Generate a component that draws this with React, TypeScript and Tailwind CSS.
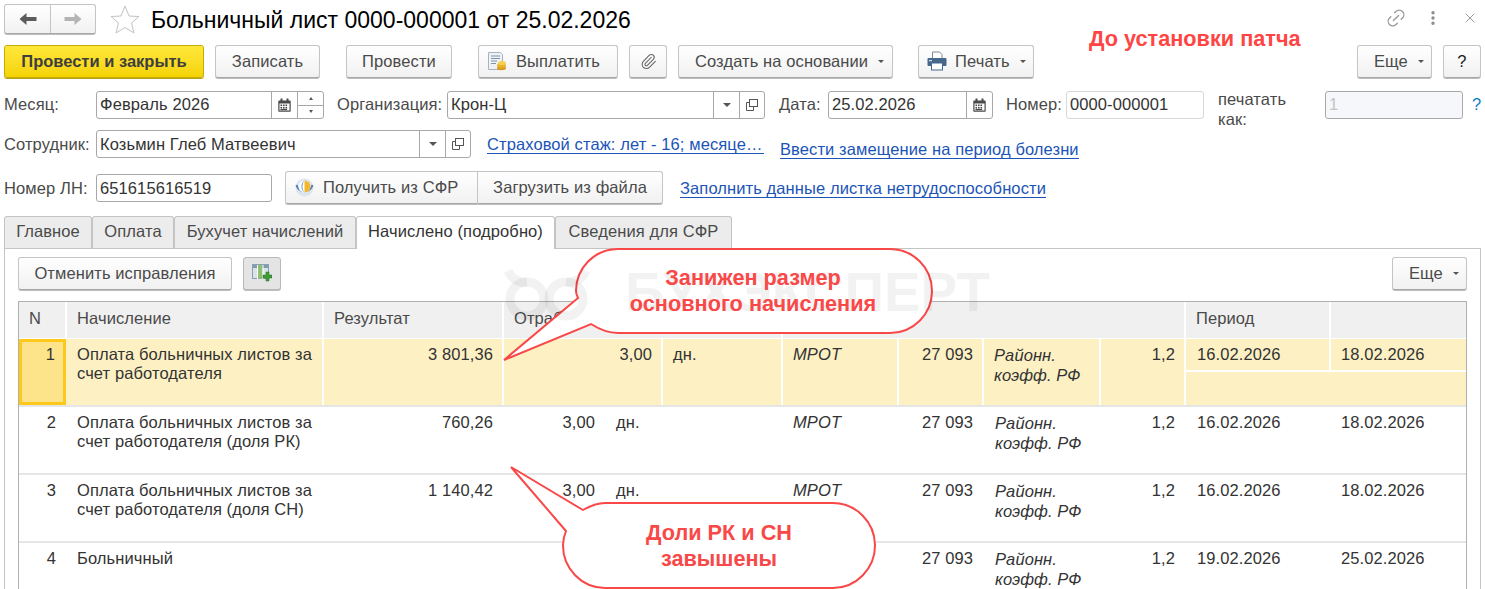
import { Link2, MoreVertical, Paperclip, X } from "lucide-react";
import type { ReactNode } from "react";

function Caret() {
  return <span className="ml-[10px] mt-[1px] h-0 w-0 border-x-[3px] border-t-[3px] border-x-transparent border-t-[#555]" />;
}

const tones = {
  plain: "border-[#c4c4c4] border-b-[#a8a8a8] bg-gradient-to-b from-white to-[#f1f1f1] text-[#4a4a4a] shadow-[0_1px_0_#bdbdbd]",
  yellow: "border-[#c9aa00] bg-gradient-to-b from-[#ffe838] to-[#f5d300] font-bold tracking-normal text-[#3e3e3e] shadow-[0_1px_0_#b9a21a]",
  pressed: "border-[#b8b8b8] bg-[#e4e4e4] shadow-[0_1px_0_#bdbdbd]",
};

function Btn({
  className = "",
  tone = "plain",
  children,
}: {
  className?: string;
  tone?: keyof typeof tones;
  children: ReactNode;
}) {
  return (
    <div className={`flex h-[33px] shrink-0 items-center rounded-[3px] border pb-[1px] ${tones[tone]} ${className}`}>
      {children}
    </div>
  );
}

function NavArrow({ color, flip }: { color: string; flip?: boolean }) {
  return (
    <svg width="18" height="14" viewBox="0 0 18 14" className={flip ? "-scale-x-100" : ""}>
      <path d="M0.500 7 L7.500 1 V5 H17.500 V9 H7.500 V13 Z" fill={color} />
    </svg>
  );
}

function CalendarIcon() {
  return (
    <svg width="13" height="14" viewBox="0 0 13 14">
      <path d="M1 2.5h11a.7.7 0 0 1 .7.7V13a.7.7 0 0 1-.7.7H1a.7.7 0 0 1-.7-.7V3.200a.7.7 0 0 1 .7-.7z" fill="#4a4a4a" />
      <rect x="2.500" y="0.500" width="2" height="3" fill="#4a4a4a" />
      <rect x="8.500" y="0.500" width="2" height="3" fill="#4a4a4a" />
      <rect x="1.500" y="5.500" width="10" height="7" fill="#fff" />
      {[2.5, 5, 7.5].map((x) =>
        [6.500, 9].map((y) => <rect key={`${x}-${y}`} x={x} y={y} width="1.600" height="1.600" fill="#4a4a4a" />),
      )}
      <rect x="2.500" y="11" width="6.600" height="1.200" fill="#4a4a4a" />
    </svg>
  );
}

function OpenIcon() {
  return (
    <svg width="12" height="12" viewBox="0 0 12 12" fill="none" stroke="#555" strokeWidth="1">
      <rect x="3.500" y="0.500" width="8" height="7" fill="#fff" />
      <path d="M3.500 3.500h-3v8h7v-4" />
    </svg>
  );
}

function BillIcon() {
  return (
    <svg width="20" height="20" viewBox="0 0 20 20">
      <path d="M1.500 1.500h12l2 2v15h-14z" fill="#eef1f5" stroke="#a9b2bd" />
      <path d="M4 5h9M4 7.500h9M4 10h6M4 12.500h5" stroke="#7f93ab" strokeWidth="1" />
      <ellipse cx="14.500" cy="17" rx="4.500" ry="2.200" fill="#d99c1f" />
      <ellipse cx="14.500" cy="14.500" rx="4.500" ry="2.200" fill="#e7b32c" />
      <ellipse cx="15" cy="12" rx="4" ry="2" fill="#f5cf50" />
    </svg>
  );
}

function PrintIcon() {
  return (
    <svg width="20" height="20" viewBox="0 0 20 20">
      <path d="M5.500 1h7l2.500 2.500V8h-9.500z" fill="#fff" stroke="#7b8796" />
      <path d="M1.500 7h17a1 1 0 0 1 1 1v6a1 1 0 0 1-1 1H1.500a1 1 0 0 1-1-1V8a1 1 0 0 1 1-1z" fill="#45688c" />
      <rect x="4.500" y="12" width="11" height="7" fill="#fff" stroke="#45688c" />
      <rect x="2" y="9" width="3" height="1.300" fill="#c7d4e1" />
    </svg>
  );
}

function SfrIcon() {
  return (
    <svg width="19" height="19" viewBox="0 0 19 19">
      <circle cx="9.500" cy="9.500" r="9" fill="#dbe5f1" />
      <path d="M1.500 7a8.300 8.300 0 0 0 16 0" fill="none" stroke="#4f7db5" strokeWidth="2" />
      <circle cx="9.500" cy="8.500" r="6" fill="#fff" />
      <path d="M9.500 2.500a6 6 0 0 1 0 12z" fill="#f2b92f" />
      <path d="M9.500 2.500a7.500 7.500 0 0 0 0 12a9 9 0 0 1 0-12z" fill="#4f7db5" />
    </svg>
  );
}

function TableAddIcon() {
  return (
    <svg width="20" height="18" viewBox="0 0 20 18">
      <rect x="0.500" y="0.500" width="16" height="14" fill="#d7e2ea" stroke="#8ba0b0" />
      <rect x="1" y="1" width="15" height="3" fill="#7f9bb0" />
      <rect x="6" y="1" width="4.500" height="13.500" fill="#8fbf70" />
      <path d="M5.500 1v14M11 1v14" stroke="#fff" />
      <path d="M14 8h3v3h3v3h-3v3h-3v-3h-3v-3h3z" fill="#3f9b35" stroke="#26701e" strokeWidth="0.500" />
    </svg>
  );
}

type Row = {
  n: string;
  name: string[];
  result: string;
  hours: string;
  from: string;
  to: string;
};

const rows: Row[] = [
  { n: "2", name: ["Оплата больничных листов за", "счет работодателя (доля РК)"], result: "760,26", hours: "3,00", from: "16.02.2026", to: "18.02.2026" },
  { n: "3", name: ["Оплата больничных листов за", "счет работодателя (доля СН)"], result: "1 140,42", hours: "3,00", from: "16.02.2026", to: "18.02.2026" },
  { n: "4", name: ["Больничный"], result: "", hours: "", from: "19.02.2026", to: "25.02.2026" },
];

const headers = [
  { label: "N", w: "w-[48px]" },
  { label: "Начисление", w: "w-[257px]" },
  { label: "Результат", w: "w-[180px]" },
  { label: "Отработано", w: "w-[279px]" },
  { label: "", w: "w-[403px]" },
  { label: "Период", w: "w-[145px]" },
  { label: "", w: "w-[135px]" },
];

export default function App() {
  return (
    <div className="relative h-[589px] w-[1485px] overflow-hidden bg-white font-['Liberation_Sans',Arial,sans-serif] text-[16.500px] leading-[20px] tracking-[0.1px] text-[#4a4a4a]">
      {/* title row */}
      <div className="flex h-[45px] items-start pl-[4px] pt-[4px]">
        <div className="flex h-[30px] w-[92px] rounded-[3px] border border-[#c4c4c4] border-b-[#a8a8a8] bg-gradient-to-b from-white to-[#f1f1f1] shadow-[0_1px_0_#bdbdbd]">
          <div className="flex w-[46px] items-center justify-center border-r border-[#c4c4c4]">
            <NavArrow color="#5c5c5c" />
          </div>
          <div className="flex flex-1 items-center justify-center">
            <NavArrow color="#b4b4b4" flip />
          </div>
        </div>
        <svg width="30" height="29" viewBox="0 0 30 29" className="ml-[14px] mt-[1px]" fill="none" stroke="#c2c2c2">
          <path d="M15 1 L19 11 L29 11.500 L21.500 18 L24 28 L15 22.500 L6 28 L8.500 18 L1 11.500 L11 11 Z" />
        </svg>
        <div className="ml-[11px] mt-[1px] whitespace-nowrap text-[23px] leading-[30px] tracking-normal text-black">
          Больничный лист 0000-000001 от 25.02.2026
        </div>
        <div className="ml-auto flex items-center pr-[7px] pt-[3px] text-[#9a9a9a]">
          <Link2 size={22} strokeWidth={1.500} className="-rotate-45" />
          <MoreVertical size={18} strokeWidth={2.500} className="ml-[17px] text-[#8a8a8a]" />
          <X size={16} strokeWidth={1.500} className="ml-[20px]" />
        </div>
      </div>

      {/* command bar */}
      <div className="flex pl-[4px]">
        <Btn tone="yellow" className="w-[200px] justify-center">
          Провести и закрыть
        </Btn>
        <Btn className="ml-[11px] w-[105px] justify-center">Записать</Btn>
        <Btn className="ml-[26px] w-[106px] justify-center">Провести</Btn>
        <Btn className="ml-[26px] w-[140px] gap-[9px] pl-[8px]">
          <BillIcon />
          Выплатить
        </Btn>
        <Btn className="ml-[11px] w-[38px] justify-center">
          <Paperclip size={17} strokeWidth={1.500} className="text-[#666]" />
        </Btn>
        <Btn className="ml-[11px] w-[215px] pl-[16px]">
          Создать на основании
          <Caret />
        </Btn>
        <Btn className="ml-[25px] w-[116px] gap-[8px] pl-[8px]">
          <PrintIcon />
          <span className="flex items-center">
            Печать
            <Caret />
          </span>
        </Btn>
        <Btn className="ml-[323px] w-[75px] pl-[16px]">
          Еще
          <Caret />
        </Btn>
        <Btn className="ml-[11px] w-[38px] justify-center text-[#222]">?</Btn>
      </div>

      {/* first field row */}
      <div className="mt-[13px] flex h-[28px] items-center pl-[4px]">
        <span className="w-[92px] pb-[2px]">Месяц:</span>
        <div className="flex h-[28px] w-[228px] items-center rounded-[3px] border border-[#a8a8a8] bg-white pl-[3px] text-[#333]">
          <span className="flex-1 pb-[2px]">Февраль 2026</span>
          <div className="flex h-full w-[26px] items-center justify-center border-l border-[#a8a8a8]">
            <CalendarIcon />
          </div>
          <div className="flex h-full w-[26px] flex-col border-l border-[#a8a8a8]">
            <div className="flex flex-1 items-center justify-center border-b border-[#a8a8a8]">
              <span className="h-0 w-0 border-x-[2px] border-b-[3px] border-x-transparent border-b-[#555]" />
            </div>
            <div className="flex flex-1 items-center justify-center">
              <span className="h-0 w-0 border-x-[2px] border-t-[3px] border-x-transparent border-t-[#555]" />
            </div>
          </div>
        </div>
        <span className="ml-[13px] w-[110px] whitespace-nowrap pb-[2px]">Организация:</span>
        <div className="flex h-[28px] w-[318px] items-center rounded-[3px] border border-[#a8a8a8] pl-[3px] text-[#333]">
          <span className="flex-1 pb-[2px]">Крон-Ц</span>
          <div className="flex h-full w-[26px] items-center justify-center border-l border-[#a8a8a8]">
            <span className="h-0 w-0 border-x-[4px] border-t-[4px] border-x-transparent border-t-[#555]" />
          </div>
          <div className="flex h-full w-[25px] items-center justify-center border-l border-[#a8a8a8]">
            <OpenIcon />
          </div>
        </div>
        <span className="ml-[14px] w-[49px] pb-[2px]">Дата:</span>
        <div className="flex h-[28px] w-[165px] items-center rounded-[3px] border border-[#a8a8a8] pl-[3px] text-[#333]">
          <span className="flex-1 pb-[2px]">25.02.2026</span>
          <div className="flex h-full w-[26px] items-center justify-center border-l border-[#a8a8a8]">
            <CalendarIcon />
          </div>
        </div>
        <span className="ml-[13px] w-[60px] pb-[2px]">Номер:</span>
        <div className="flex h-[28px] w-[138px] items-center rounded-[3px] border border-[#d8d8d8] pb-[2px] pl-[3px] text-[#333]">
          0000-000001
        </div>
        <span className="ml-[14px] mt-[8px] w-[93px] leading-[20px]">печатать как:</span>
        <div className="ml-[14px] flex h-[28px] w-[138px] items-center rounded-[3px] border border-[#a8a8a8] bg-[#f5f7fb] pb-[2px] pl-[3px] text-[#c4c4c4]">
          1
        </div>
        <span className="ml-[9px] pb-[2px] text-[#0d7fc0]">?</span>
      </div>

      {/* employee row */}
      <div className="mt-[11px] flex h-[28px] items-center pl-[4px]">
        <span className="w-[92px]">Сотрудник:</span>
        <div className="flex h-[28px] w-[375px] items-center rounded-[3px] border border-[#a8a8a8] pl-[3px] text-[#333]">
          <span className="flex-1">Козьмин Глеб Матвеевич</span>
          <div className="flex h-full w-[26px] items-center justify-center border-l border-[#a8a8a8]">
            <span className="h-0 w-0 border-x-[4px] border-t-[4px] border-x-transparent border-t-[#555]" />
          </div>
          <div className="flex h-full w-[25px] items-center justify-center border-l border-[#a8a8a8]">
            <OpenIcon />
          </div>
        </div>
        <span className="ml-[16px] w-[277px] overflow-hidden whitespace-nowrap border-b border-[#1b55b8] leading-[18px] text-[#1b55b8]">
          Страховой стаж: лет - 16; месяце…
        </span>
        <span className="relative top-[5px] ml-[16px] whitespace-nowrap border-b border-[#1b55b8] leading-[18px] text-[#1b55b8]">
          Ввести замещение на период болезни
        </span>
      </div>

      {/* sick list number row */}
      <div className="mt-[13px] flex h-[33px] items-center pl-[4px]">
        <span className="w-[92px]">Номер ЛН:</span>
        <div className="flex h-[28px] w-[176px] items-center rounded-[3px] border border-[#a8a8a8] pl-[3px] text-[#333]">
          651615616519
        </div>
        <Btn className="ml-[13px] w-[193px] gap-[9px] rounded-r-none pl-[9px]">
          <SfrIcon />
          Получить из СФР
        </Btn>
        <Btn className="w-[185px] justify-center rounded-l-none border-l-0">Загрузить из файла</Btn>
        <span className="relative top-[1px] ml-[17px] whitespace-nowrap border-b border-[#1b55b8] leading-[18px] text-[#1b55b8]">
          Заполнить данные листка нетрудоспособности
        </span>
      </div>

      {/* tabs */}
      <div className="mt-[12px] flex h-[32px] pl-[4px]">
        {[
          { label: "Главное", w: "w-[88px]" },
          { label: "Оплата", w: "w-[82px]" },
          { label: "Бухучет начислений", w: "w-[182px]" },
        ].map((t) => (
          <div key={t.label} className={`flex items-center justify-center rounded-t-[3px] border border-b-0 border-[#c4c4c4] bg-[#ececec] pb-[4px] ${t.w}`}>
            {t.label}
          </div>
        ))}
        <div className="z-10 flex h-[33px] w-[199px] items-center justify-center rounded-t-[3px] border border-b-0 border-[#c4c4c4] bg-white pb-[5px] text-[#333]">
          Начислено (подробно)
        </div>
        <div className="flex w-[177px] items-center justify-center rounded-t-[3px] border border-b-0 border-[#c4c4c4] bg-[#ececec] pb-[4px]">
          Сведения для СФР
        </div>
      </div>

      {/* tab panel */}
      <div className="ml-[4px] h-[341px] w-[1477px] border-x border-t border-[#c4c4c4] px-[13px] pt-[8px]">
        <div className="flex">
          <Btn className="w-[214px] justify-center">Отменить исправления</Btn>
          <Btn tone="pressed" className="ml-[11px] w-[38px] justify-center">
            <TableAddIcon />
          </Btn>
          <Btn className="ml-auto w-[75px] pl-[16px]">
            Еще
            <Caret />
          </Btn>
        </div>

        <div className="mt-[11px] w-[1449px] border-x border-t border-[#b0b0b0]">
          {/* header */}
          <div className="flex h-[36px] bg-[#f0f0f0]">
            {headers.map((h, i) => (
              <div key={i} className={`flex shrink-0 items-center border-r-2 border-white pb-[4px] pl-[10px] last:border-r-0 ${h.w}`}>
                {h.label}
              </div>
            ))}
          </div>

          {/* selected row */}
          <div className="mt-[1px] flex h-[66px] bg-[#fdf1c4] text-[#333]">
            <div className="w-[47px] shrink-0 border-[3px] border-[#fcc81c] bg-[#fde48b] pr-[8px] pt-[2px] text-right">1</div>
            <div className="w-[258px] shrink-0 border-r-2 border-white pl-[11px] pt-[6px] leading-[19px]">
              <p>Оплата больничных листов за</p>
              <p>счет работодателя</p>
            </div>
            <div className="w-[180px] shrink-0 border-r-2 border-white pr-[9px] pt-[5px] text-right">3 801,36</div>
            <div className="w-[159px] shrink-0 border-r-2 border-white pr-[9px] pt-[5px] text-right">3,00</div>
            <div className="w-[120px] shrink-0 border-r-2 border-white pl-[10px] pt-[5px]">дн.</div>
            <div className="w-[116px] shrink-0 border-r-2 border-white pl-[10px] pt-[5px] italic">МРОТ</div>
            <div className="w-[85px] shrink-0 border-r-2 border-white pr-[9px] pt-[5px] text-right">27 093</div>
            <div className="w-[117px] shrink-0 border-r-2 border-white pl-[10px] pt-[6px] italic">
              <p>Районн.</p>
              <p>коэфф. РФ</p>
            </div>
            <div className="w-[85px] shrink-0 border-r-2 border-white pr-[9px] pt-[5px] text-right">1,2</div>
            <div className="flex-1">
              <div className="flex h-[33px] border-b-2 border-white">
                <div className="w-[145px] border-r-2 border-white pl-[11px] pt-[5px]">16.02.2026</div>
                <div className="pl-[10px] pt-[5px]">18.02.2026</div>
              </div>
            </div>
          </div>

          {/* other rows */}
          {rows.map((r) => (
            <div key={r.n} className="flex h-[68px] border-t-2 border-[#e6e6e6] text-[#333]">
              <div className="w-[47px] shrink-0 pr-[10px] pt-[5px] text-right">{r.n}</div>
              <div className="w-[258px] shrink-0 pl-[11px] pt-[6px] leading-[19px]">
                {r.name.map((line) => (
                  <p key={line}>{line}</p>
                ))}
              </div>
              <div className="w-[180px] shrink-0 pr-[11px] pt-[5px] text-right">{r.result}</div>
              <div className="w-[102px] shrink-0 pr-[11px] pt-[5px] text-right">{r.hours}</div>
              <div className="w-[177px] shrink-0 pl-[10px] pt-[5px]">{r.hours && "дн."}</div>
              <div className="w-[116px] shrink-0 pl-[10px] pt-[5px] italic">МРОТ</div>
              <div className="w-[85px] shrink-0 pr-[11px] pt-[5px] text-right">27 093</div>
              <div className="w-[117px] shrink-0 pl-[11px] pt-[6px] italic">
                <p>Районн.</p>
                <p>коэфф. РФ</p>
              </div>
              <div className="w-[85px] shrink-0 pr-[11px] pt-[5px] text-right">1,2</div>
              <div className="w-[145px] shrink-0 pl-[11px] pt-[5px]">{r.from}</div>
              <div className="pl-[10px] pt-[5px]">{r.to}</div>
            </div>
          ))}
        </div>
      </div>

      {/* red note */}
      <div className="absolute left-[1089px] top-[26px] whitespace-nowrap text-[21.700px] font-bold leading-[26px] tracking-normal text-[#ff4444]">
        До установки патча
      </div>

      {/* callouts */}
      <svg className="pointer-events-none absolute left-0 top-0" width="1485" height="589" viewBox="0 0 1485 589">
        <path
          d="M578 298 L504 360 L591 324 C602 331 610 333 618 333 L890 333 A42 42 0 0 0 932 291 A42 42 0 0 0 890 249 L618 249 A42 42 0 0 0 576 291 C576 294 577 296 578 298 Z"
          fill="#fff"
          stroke="#f94848"
          strokeWidth="2"
        />
        <path
          d="M583 510 L511 467 L566 531 C564 536 563 540 563 545 A42.500 42.500 0 0 0 605 588 L833 588 A42.500 42.500 0 0 0 875 545 A42.500 42.500 0 0 0 833 503 L605 503 C597 503 590 506 583 510 Z"
          fill="#fff"
          stroke="#f94848"
          strokeWidth="2"
        />
      </svg>

      {/* watermark, lies over the callout */}
      <svg className="pointer-events-none absolute left-[500px] top-[265px]" width="100" height="60" viewBox="0 0 100 60" fill="none" stroke="#000" strokeOpacity="0.05" strokeWidth="9">
        <circle cx="27" cy="34" r="17" />
        <circle cx="66" cy="34" r="17" />
        <path d="M8 6c4 8 10 12 19 11M86 6c-4 8-10 12-20 11" />
      </svg>
      <div className="pointer-events-none absolute left-[625px] top-[262px] whitespace-nowrap text-[55px] font-bold leading-[60px] tracking-normal text-black/5">
        БУХЭКСПЕРТ
      </div>

      <div className="absolute left-[576px] top-[265px] w-[354px] text-center text-[21.700px] font-bold leading-[26px] tracking-normal text-[#f94848]">
        <p>Занижен размер</p>
        <p>основного начисления</p>
      </div>
      <div className="absolute left-[563px] top-[520px] w-[312px] text-center text-[21.700px] font-bold leading-[26px] tracking-normal text-[#f94848]">
        <p>Доли РК и СН</p>
        <p>завышены</p>
      </div>
    </div>
  );
}
